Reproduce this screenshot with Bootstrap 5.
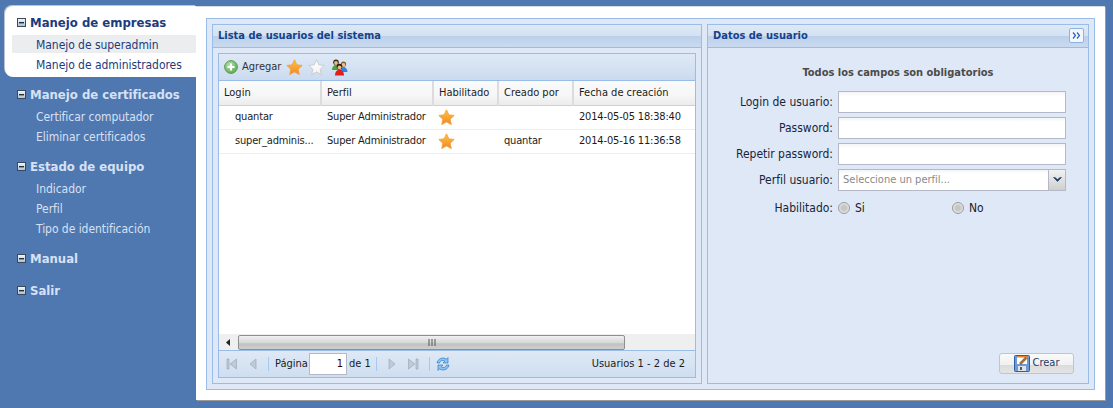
<!DOCTYPE html>
<html lang="es">
<head>
  <meta charset="UTF-8" />
  <title>Manejo de empresas</title>
  <link href="https://cdn.jsdelivr.net/npm/bootstrap@5.3.2/dist/css/bootstrap.min.css" rel="stylesheet" />
  <style>
    html, body { height: 100%; }
    body {
      background: #4f77b0;
      font-family: "DejaVu Sans Condensed", "DejaVu Sans", sans-serif;
      font-size: 11px;
      color: #1c1c1c;
      overflow: hidden;
    }
    .app-shell { height: 408px; padding: 6px 8px 8px 5px; }
    .side-col { width: 191px; flex: none; }
    .side-group { padding: 5px 0 3px 7px; margin-bottom: 1px; color: #d6e1f5; }
    .side-group.open { background: #fff; color: #1d3b7c; border-radius: 8px 0 0 8px; box-shadow: -1px -1px 0 #b8c3d3; }
    .side-head { height: 23px; padding-left: 5px; font: bold 13px "DejaVu Sans Condensed", "DejaVu Sans", sans-serif; gap: 4px; }
    .side-item { height: 20px; line-height: 22px; padding-left: 24px; font-size: 12px; letter-spacing: -.05px; }
    .side-item.sel { background: #ecedef; height: 18px; line-height: 20px; margin: 1px 0; }
    .work-area { background: #fff; border-top: 1px solid #d5dbe4; box-shadow: 1px 1px 0 #9a9a9a; padding: 11px 10px 10px 10px; flex: 1; min-width: 0; }
    .outer-box { border: 1px solid #99bce8; background: #dfe8f6; padding: 5px; gap: 5px; height: 100%; }
    .pane { border: 1px solid #99bce8; background: #dfe8f6; min-width: 0; }
    .pane-left { width: 490px; flex: none; }
    .pane-title {
      height: 23px; padding: 0 4px 2px 5px; font: bold 11px "DejaVu Sans Condensed", "DejaVu Sans", sans-serif; color: #15428b;
      background: linear-gradient(#dfe9f6, #d3e1f1 50%, #bcd0ea 50%, #c9daf0);
      border-bottom: 1px solid #99bce8;
    }
    .expand-btn { width: 15px; height: 15px; border: 1px solid #8fb2e4; border-radius: 2px; background: #f3f7fd; }
    .grid-box { border: 1px solid #99bce8; margin: 5px; }
    .grid-tools {
      height: 27px; padding-left: 5px; gap: 5px; color: #333; border-bottom: 1px solid #99bce8;
      background: linear-gradient(#dfe9f6, #cbdbef);
    }
    .grid-body { background: #fff; min-height: 0; }
    .user-table { table-layout: fixed; width: 476px; margin: 0; font-size: 11px; }
    .user-table th, .user-table td { padding: 0 5px; vertical-align: middle; white-space: nowrap; color: #1c1c1c; }
    .user-table th {
      height: 24px; font-weight: normal; border-bottom: 1px solid #d0d0d0; border-right: 2px solid #dcdcdc;
      background: linear-gradient(#fafafa, #f7f7f7 55%, #ececec);
    }
    .user-table th:last-child { border-right: 0; }
    .user-table td { height: 24px; padding-left: 6px; border-bottom: 1px solid #ededed; background: #fff; letter-spacing: -.17px; }
    .user-table td.login-cell { padding: 0 0 0 16px; }
    .user-table td.star-cell { padding-left: 5px; }
    .scroll-strip { height: 16px; background: #efefef; padding-right: 1px; }
    .scroll-arrow { width: 19px; }
    .scroll-thumb {
      width: 387px; height: 15px; border: 1px solid #8e8e8e; border-radius: 2px;
      background: linear-gradient(#f0f0f0, #d8d8d8 50%, #c2c2c2 60%, #cfcfcf);
    }
    .pager {
      height: 27px; border-top: 1px solid #99bce8; padding: 0 10px 0 7px;
      background: linear-gradient(#dfe9f6, #cfdef0);
    }
    .pager-sep { width: 1px; height: 14px; background: #a9c8f0; }
    .page-box { width: 38px; height: 22px; background: #fff; border: 1px solid #b5b8c8; text-align: right; padding: 2px 3px; color: #300; }
    .pg-1 { margin-left: 1px; }
    .pg-2 { margin-left: 2px; }
    .pg-5 { margin-left: 5px; }
    .pg-6 { margin-left: 6px; }
    .pg-8 { margin-left: 8px; }
    .pg-10 { margin-left: 10px; }
    .form-head { text-align: center; font: bold 11px "DejaVu Sans Condensed", "DejaVu Sans", sans-serif; color: #4b4b4b; margin: 18px 0 12px; }
    .field-row { height: 22px; margin-bottom: 4px; gap: 5px; font-size: 12px; }
    .field-name { width: 125px; text-align: right; color: #15253b; }
    .field-input { width: 228px; height: 22px; background: linear-gradient(#f4f4f4, #fff 4px); border: 1px solid #b5b8c8; }
    .field-select { padding-left: 4px; color: #8a8a8a; font-size: 11px; }
    .select-btn { width: 17px; height: 20px; background: linear-gradient(#f2f2f2, #cfcfcf); border-left: 1px solid #b5b8c8; }
    .radio-row { margin-top: 2px; }
    .radio-dot { width: 12px; height: 12px; border-radius: 50%; border: 1px solid #999; background: radial-gradient(#c6c6c6 35%, #f0f0f0 80%); }
    .radio-wrap { width: 114px; gap: 5px; }
    .save-btn {
      width: 75px; height: 21px; margin: 0 14px 9px 0; gap: 3px; font-size: 11px; color: #1a3a66;
      border: 1px solid #c4c4c4; border-radius: 3px; background: linear-gradient(#fafafa, #f0f0f0 60%, #dcdcdc 60%, #e4e4e4);
    }
  </style>
</head>
<body>
<svg width="0" height="0" class="d-block">
  <defs>
    <linearGradient id="boxg" x1="0" y1="0" x2="0" y2="1"><stop offset="0" stop-color="#f7f9fc"/><stop offset="1" stop-color="#aebccf"/></linearGradient>
    <linearGradient id="stary" x1="0" y1="0" x2="0" y2="1"><stop offset="0" stop-color="#ffc53d"/><stop offset="1" stop-color="#f2862a"/></linearGradient>
    <linearGradient id="starw" x1="0" y1="0" x2="0" y2="1"><stop offset="0" stop-color="#ffffff"/><stop offset="1" stop-color="#f2f2f2"/></linearGradient>
    <radialGradient id="greeng" cx=".4" cy=".35" r=".8"><stop offset="0" stop-color="#b7e4ad"/><stop offset="1" stop-color="#4f9d45"/></radialGradient>
    <symbol id="minus-box" viewBox="0 0 9 9"><rect x=".5" y=".5" width="8" height="8" fill="url(#boxg)" stroke="#3a4a5c"/><rect x="2" y="4" width="5" height="1.4" fill="#1f2f42"/></symbol>
    <symbol id="star" viewBox="0 0 16 16"><path d="M8 .8l2.200 4.700 5 .6-3.700 3.500 1 5.100L8 12.200l-4.500 2.500 1-5.100L.8 6.100l5-.6z" stroke-linejoin="round"/></symbol>
  </defs>
</svg>
<div class="app-shell d-flex">
  <nav class="side-col">
    <div class="side-group open">
      <div class="side-head d-flex align-items-center"><svg width="9" height="9"><use href="#minus-box"/></svg>Manejo de empresas</div>
      <div class="side-item sel">Manejo de superadmin</div>
      <div class="side-item">Manejo de administradores</div>
    </div>
    <div class="side-group">
      <div class="side-head d-flex align-items-center"><svg width="9" height="9"><use href="#minus-box"/></svg>Manejo de certificados</div>
      <div class="side-item">Certificar computador</div>
      <div class="side-item">Eliminar certificados</div>
    </div>
    <div class="side-group">
      <div class="side-head d-flex align-items-center"><svg width="9" height="9"><use href="#minus-box"/></svg>Estado de equipo</div>
      <div class="side-item">Indicador</div>
      <div class="side-item">Perfil</div>
      <div class="side-item">Tipo de identificación</div>
    </div>
    <div class="side-group">
      <div class="side-head d-flex align-items-center"><svg width="9" height="9"><use href="#minus-box"/></svg>Manual</div>
    </div>
    <div class="side-group">
      <div class="side-head d-flex align-items-center"><svg width="9" height="9"><use href="#minus-box"/></svg>Salir</div>
    </div>
  </nav>
  <main class="work-area">
    <div class="outer-box d-flex">
      <section class="pane pane-left d-flex flex-column">
        <div class="pane-title d-flex align-items-center">Lista de usuarios del sistema</div>
        <div class="grid-box d-flex flex-column flex-grow-1">
          <div class="grid-tools d-flex align-items-center">
            <span class="d-flex align-items-center gap-1">
              <svg width="14" height="14" viewBox="0 0 14 14"><circle cx="7" cy="7" r="6.400" fill="url(#greeng)" stroke="#5f9a58"/><path d="M6 3.500h2V6h2.500v2H8v2.500H6V8H3.500V6H6z" fill="#fff"/></svg>
              Agregar
            </span>
            <svg width="17" height="17" fill="url(#stary)" stroke="#f0a040" stroke-width=".8"><use href="#star"/></svg>
            <svg width="17" height="17" fill="url(#starw)" stroke="#c6c6c6" stroke-width=".8"><use href="#star"/></svg>
            <svg width="17" height="17" viewBox="0 0 17 17" class="pg-1">
              <circle cx="5" cy="3.200" r="2.800" fill="#3a2a1a"/><circle cx="5" cy="4" r="1.900" fill="#eab98a"/><path d="M1 11c0-3 1.500-5 4-5s4 2 4 5z" fill="#45a83a"/>
              <circle cx="12.500" cy="5" r="2.600" fill="#8a5a22"/><circle cx="12.500" cy="5.800" r="1.800" fill="#f0c08e"/><path d="M9 13c0-3 1.500-5 3.500-5s4 2 4 5z" fill="#2f86e0"/>
              <circle cx="8.500" cy="7.500" r="2.800" fill="#2a1a12"/><circle cx="8.500" cy="8.300" r="1.900" fill="#f0b98a"/><path d="M4 16.500c0-3.500 2-6 4.500-6s4.500 2.500 4.500 6z" fill="#e0201c"/>
            </svg>
          </div>
          <div class="grid-body flex-grow-1">
            <table class="table user-table">
              <colgroup><col style="width:102px"><col style="width:112px"><col style="width:65px"><col style="width:75px"><col style="width:122px"></colgroup>
              <thead>
                <tr><th>Login</th><th>Perfil</th><th>Habilitado</th><th>Creado por</th><th>Fecha de creación</th></tr>
              </thead>
              <tbody>
                <tr><td class="login-cell">quantar</td><td>Super Administrador</td><td class="star-cell"><svg width="17" height="17" fill="url(#stary)" stroke="#f0a040" stroke-width=".8" class="d-block"><use href="#star"/></svg></td><td></td><td>2014-05-05 18:38:40</td></tr>
                <tr><td class="login-cell">super_adminis...</td><td>Super Administrador</td><td class="star-cell"><svg width="17" height="17" fill="url(#stary)" stroke="#f0a040" stroke-width=".8" class="d-block"><use href="#star"/></svg></td><td>quantar</td><td>2014-05-16 11:36:58</td></tr>
              </tbody>
            </table>
          </div>
          <div class="scroll-strip d-flex align-items-center">
            <div class="scroll-arrow d-flex justify-content-center"><svg width="5" height="7"><path d="M4 0v7L0 3.500z" fill="#222"/></svg></div>
            <div class="scroll-thumb d-flex align-items-center justify-content-center"><svg width="8" height="7"><path d="M1 0v7M4 0v7M7 0v7" stroke="#555"/></svg></div>
          </div>
          <div class="pager d-flex align-items-center">
            <svg width="12" height="12" viewBox="0 0 12 12"><path d="M1 1h2v10H1zM10.500 1v10L4 6z" fill="#c0cad6" stroke="#98a2ae" stroke-width=".6"/></svg>
            <svg width="12" height="12" viewBox="0 0 12 12" class="pg-8"><path d="M10 1v10L4 6z" fill="#c0cad6" stroke="#98a2ae" stroke-width=".6"/></svg>
            <span class="pager-sep pg-10"></span>
            <span class="pg-6">Página</span><span class="page-box pg-1">1</span><span class="pg-2">de 1</span>
            <span class="pager-sep pg-5"></span>
            <svg width="12" height="12" viewBox="0 0 12 12" class="pg-10"><path d="M2 1v10l6-5z" fill="#c0cad6" stroke="#98a2ae" stroke-width=".6"/></svg>
            <svg width="12" height="12" viewBox="0 0 12 12" class="pg-8"><path d="M9 1h2v10H9zM1.500 1v10L8 6z" fill="#c0cad6" stroke="#98a2ae" stroke-width=".6"/></svg>
            <span class="pager-sep pg-10"></span>
            <svg width="16" height="16" viewBox="0 0 16 16" class="pg-5"><path d="M2 7c.5-3 3-5 6-5 1.500 0 2.600.5 3.500 1.200L13 1.500V7H8l1.800-1.800C9.200 4.700 8.600 4.500 8 4.500 6 4.500 4.800 5.500 4.500 7zM14 9c-.5 3-3 5-6 5-1.500 0-2.600-.5-3.500-1.200L3 14.500V9h5l-1.800 1.800c.6.5 1.200.7 1.800.7 2 0 3.200-1 3.500-2.500z" fill="#8cc4f5" stroke="#1f6dbd" stroke-width=".6"/></svg>
            <span class="ms-auto">Usuarios 1 - 2 de 2</span>
          </div>
        </div>
      </section>
      <section class="pane flex-grow-1 d-flex flex-column">
        <div class="pane-title d-flex align-items-center justify-content-between">
          Datos de usuario
          <span class="expand-btn d-flex align-items-center justify-content-center"><svg width="9" height="7" viewBox="0 0 9 7"><path d="M1 .5L3.500 3.500 1 6.500M5 .5l2.500 3L5 6.500" fill="none" stroke="#2f62ad" stroke-width="1.200"/></svg></span>
        </div>
        <div class="form-head">Todos los campos son obligatorios</div>
        <div class="field-row d-flex align-items-center"><label class="field-name">Login de usuario:</label><div class="field-input"></div></div>
        <div class="field-row d-flex align-items-center"><label class="field-name">Password:</label><div class="field-input"></div></div>
        <div class="field-row d-flex align-items-center"><label class="field-name">Repetir password:</label><div class="field-input"></div></div>
        <div class="field-row d-flex align-items-center"><label class="field-name">Perfil usuario:</label>
          <div class="field-input field-select d-flex align-items-center justify-content-between">Seleccione un perfil...
            <span class="select-btn d-flex align-items-center justify-content-center"><svg width="9" height="6"><path d="M.5 .5L4.500 4.500 8.500 .5 7 .5 4.500 2.500 2 .5z" fill="#1f3c66" stroke="#1f3c66" stroke-width=".6"/></svg></span>
          </div>
        </div>
        <div class="field-row radio-row d-flex align-items-center"><label class="field-name">Habilitado:</label>
          <div class="d-flex">
            <span class="radio-wrap d-flex align-items-center"><span class="radio-dot"></span>Si</span>
            <span class="radio-wrap d-flex align-items-center"><span class="radio-dot"></span>No</span>
          </div>
        </div>
        <div class="mt-auto d-flex justify-content-end">
          <button type="button" class="save-btn d-flex align-items-center justify-content-center p-0">
            <svg width="16" height="17" viewBox="0 0 16 17"><rect x=".5" y=".5" width="15" height="16" rx="1" fill="#6f9ad8" stroke="#2f5f9e"/><rect x="3" y="1" width="10" height="8" fill="#fff"/><rect x="3" y="1" width="10" height="1.500" fill="#e9822c"/><path d="M5.500 8l6-6 1.500 1.500-6 6z" fill="#b0702a" stroke="#5a3a12" stroke-width=".5"/><rect x="4" y="11" width="8" height="5" fill="#dfe3e8"/><rect x="6" y="12" width="2" height="3" fill="#4a5a6c"/></svg>
            Crear
          </button>
        </div>
      </section>
    </div>
  </main>
</div>
<script src="https://cdn.jsdelivr.net/npm/bootstrap@5.3.2/dist/js/bootstrap.bundle.min.js"></script>
</body>
</html>
